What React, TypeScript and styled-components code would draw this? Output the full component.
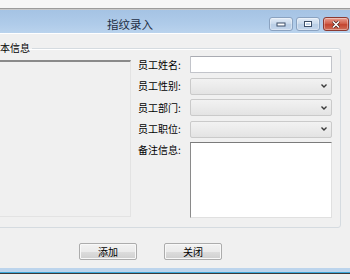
import React from 'react'
import styled, { createGlobalStyle } from 'styled-components'

const GlobalStyle = createGlobalStyle`
  html, body {
    margin: 0;
    padding: 0;
    width: 350px;
    height: 280px;
    overflow: hidden;
    background: #f0f0f0;
  }
  body {
    font-family: "Noto Sans CJK SC", "Noto Sans", sans-serif;
    font-size: 10px;
    color: #000;
  }
`

const Screen = styled.div`
  width: 350px;
  height: 280px;
  display: flex;
  flex-direction: column;
  overflow: hidden;
`

const DesktopStrip = styled.div`
  height: 8px;
  background: #f6f6f6;
  border-bottom: 1px solid #9c9c9c;
  box-shadow: 0 1px 0 #c9c9c9;
  flex-shrink: 0;
`

const TitleBar = styled.div`
  height: 23px;
  margin-top: 1px;
  display: flex;
  align-items: flex-start;
  background: linear-gradient(to bottom, #a5c3e4 0%, #afcbe9 60%, #bad3ed 100%);
  border-bottom: 1px solid #ffffff;
  flex-shrink: 0;
`

const Title = styled.span`
  flex: 1;
  padding-left: 107px;
  padding-top: 7px;
  font-size: 11.5px;
  line-height: 14px;
  color: #1f2f45;
`

const Controls = styled.div`
  display: flex;
  gap: 3px;
  padding-top: 7px;
  padding-right: 1px;
`

const CtrlButton = styled.div<{ $kind: 'min' | 'max' | 'close' }>`
  width: ${p => (p.$kind === 'close' ? 26 : 24)}px;
  height: 14px;
  box-sizing: border-box;
  border: 1px solid ${p => (p.$kind === 'close' ? '#8b3a32' : '#8aa2c0')};
  border-radius: 3px;
  display: flex;
  align-items: center;
  justify-content: center;
  background: ${p =>
    p.$kind === 'close'
      ? 'linear-gradient(to bottom, #e8a093 0%, #d2614c 45%, #c44530 55%, #d0705a 100%)'
      : 'linear-gradient(to bottom, #e3ecf7 0%, #cbdbed 45%, #b9cee6 55%, #c4d6eb 100%)'};
  box-shadow: inset 0 0 0 1px rgba(255, 255, 255, 0.35);
`

const Body = styled.div`
  flex: 1;
  display: flex;
  flex-direction: column;
  background: #f0f0f0;
`

const Group = styled.fieldset`
  margin: 7px 9px 0 -20px;
  padding: 1px 8px 9px 9px;
  border: 1px solid #d5dbe0;
  border-radius: 3px;
  box-shadow: inset 1px 1px 0 #ffffff;
  display: flex;
  gap: 7px;
  min-width: 0;
`

const Legend = styled.legend`
  margin-left: -2px;
  padding: 0 2px;
  font-size: 10px;
  line-height: 14px;
  color: #000;
`

const PhotoPanel = styled.div`
  width: 141px;
  height: 157px;
  margin-top: 4px;
  box-sizing: border-box;
  border-top: 2px solid #8a8a8a;
  border-left: 1px solid #a0a0a0;
  border-right: 1px solid #e3e3e3;
  border-bottom: 1px solid #e3e3e3;
  background: #f0f0f0;
`

const Form = styled.div`
  display: grid;
  grid-template-columns: 52px 142px;
  grid-template-rows: 17px 17px 17px 17px 76px;
  row-gap: 4.5px;
`

const Label = styled.label<{ $top?: boolean }>`
  display: flex;
  align-items: ${p => (p.$top ? 'flex-start' : 'center')};
  font-size: 10px;
  line-height: 12px;
  padding-top: ${p => (p.$top ? 2 : 0)}px;
  white-space: nowrap;
`

const TextInput = styled.div`
  box-sizing: border-box;
  background: #ffffff;
  border: 1px solid #c2c4ca;
  border-top-color: #a9abb2;
  border-radius: 1px;
`

const Combo = styled.div`
  box-sizing: border-box;
  display: flex;
  align-items: center;
  justify-content: flex-end;
  padding-right: 4px;
  background: linear-gradient(to bottom, #f2f2f2 0%, #ebebeb 50%, #e3e3e3 100%);
  border: 1px solid #cacaca;
  border-radius: 2px;
`

const Memo = styled.div`
  box-sizing: border-box;
  background: #ffffff;
  border-top: 1px solid #7b7b7b;
  border-left: 1px solid #8a8a8a;
  border-right: 1px solid #e0e0e0;
  border-bottom: 1px solid #e0e0e0;
`

const Footer = styled.div`
  display: flex;
  gap: 27px;
  padding: 15px 0 0 79px;
  height: 24px;
`

const Button = styled.button`
  width: 58px;
  height: 17px;
  padding: 0;
  box-sizing: border-box;
  font-family: inherit;
  font-size: 10px;
  line-height: 14px;
  color: #000;
  border: 1px solid #acacac;
  border-radius: 2px;
  background: linear-gradient(to bottom, #f2f2f2 0%, #ebebeb 50%, #dddddd 51%, #cfcfcf 100%);
  box-shadow: inset 0 0 0 1px #f8f8f8;
`

const FrameBottom = styled.div`
  height: 4px;
  background: #bcd4ec;
  border-bottom: 1px solid #3ba6d8;
  box-shadow: 0 1px 0 #3a3a3a;
  flex-shrink: 0;
`

const BelowFrame = styled.div`
  height: 6px;
  margin-top: 1px;
  background: #f0f0f0;
  flex-shrink: 0;
`

const Chevron = () => (
  <svg width='6' height='4' viewBox='0 0 6 4'>
    <path d='M0.5 0.5 L3 3 L5.5 0.5' fill='none' stroke='#3a3a3a' strokeWidth='1.4' />
  </svg>
)

const MinIcon = () => (
  <svg width='10' height='6' viewBox='0 0 10 6'>
    <rect x='1' y='2' width='8' height='3' fill='#fff' stroke='#3c4e68' strokeWidth='1' />
  </svg>
)

const MaxIcon = () => (
  <svg width='10' height='8' viewBox='0 0 10 8'>
    <rect x='1.5' y='1.5' width='7' height='5' fill='none' stroke='#3c4e68' strokeWidth='1' />
    <rect x='2.5' y='2.5' width='5' height='3' fill='none' stroke='#fff' strokeWidth='1' />
  </svg>
)

const CloseIcon = () => (
  <svg width='10' height='9' viewBox='0 0 10 9'>
    <path d='M2 1.5 L8 7.5 M8 1.5 L2 7.5' stroke='#4a1f1a' strokeWidth='3' />
    <path d='M2 1.5 L8 7.5 M8 1.5 L2 7.5' stroke='#fff' strokeWidth='1.6' />
  </svg>
)

const fields = ['员工性别:', '员工部门:', '员工职位:']

export const App = () => (
  <Screen>
    <GlobalStyle />
    <DesktopStrip />
    <TitleBar>
      <Title>指纹录入</Title>
      <Controls>
        <CtrlButton $kind='min'><MinIcon /></CtrlButton>
        <CtrlButton $kind='max'><MaxIcon /></CtrlButton>
        <CtrlButton $kind='close'><CloseIcon /></CtrlButton>
      </Controls>
    </TitleBar>

    <Body>
      <Group>
        <Legend>基本信息</Legend>
        <PhotoPanel />
        <Form>
          <Label>员工姓名:</Label>
          <TextInput />
          {fields.map(name => (
            <React.Fragment key={name}>
              <Label>{name}</Label>
              <Combo><Chevron /></Combo>
            </React.Fragment>
          ))}
          <Label $top>备注信息:</Label>
          <Memo />
        </Form>
      </Group>

      <Footer>
        <Button>添加</Button>
        <Button>关闭</Button>
      </Footer>
    </Body>

    <FrameBottom />
    <BelowFrame />
  </Screen>
)

export default App
